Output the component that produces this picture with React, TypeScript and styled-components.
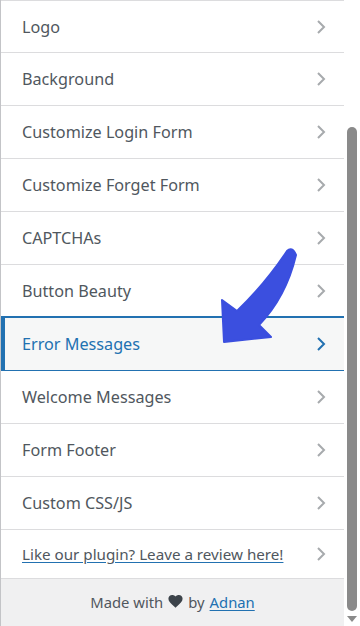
import React from 'react';
import styled, { createGlobalStyle } from 'styled-components';

const GlobalStyle = createGlobalStyle`
  html, body {
    margin: 0;
    padding: 0;
    background: #ffffff;
  }
  body {
    font-family: "Noto Sans", "Open Sans", sans-serif;
  }
`;

const Screen = styled.div`
  position: relative;
  display: flex;
  width: 360px;
  height: 626px;
  overflow: hidden;
`;

const Panel = styled.div`
  flex: 1;
  display: flex;
  flex-direction: column;
  border-left: 1px solid #c3c4c7;
  background: #ffffff;
`;

const List = styled.ul`
  list-style: none;
  margin: 0;
  padding: 0;
  border-top: 1px solid #dcdcde;
`;

const Row = styled.li<{ $active?: boolean }>`
  display: flex;
  align-items: center;
  justify-content: space-between;
  box-sizing: border-box;
  height: 53px;
  padding: 0 18px 0 21px;
  border-bottom: 1px solid ${(p) => (p.$active ? '#2271b1' : '#dcdcde')};
  background: ${(p) => (p.$active ? '#f6f7f7' : '#ffffff')};
  color: ${(p) => (p.$active ? '#2271b1' : '#50575e')};
  font-size: 16.2px;
  ${(p) =>
    p.$active &&
    `
    border-left: 4px solid #2271b1;
    padding-left: 17px;
    box-shadow: 0 -2px 0 #2271b1;
  `}
  &:first-child {
    height: 52px;
  }
`;

const ReviewRow = styled(Row)`
  height: 49px;
  border-bottom: 1px solid #dcdcde;
`;

const Label = styled.span`
  letter-spacing: 0;
`;

const ReviewLink = styled.a`
  color: #50575e;
  font-size: 15.2px;
  text-decoration: underline;
  text-decoration-color: #2271b1;
  text-underline-offset: 2px;
`;

const Chevron = styled.svg<{ $active?: boolean }>`
  width: 10px;
  height: 16px;
  fill: none;
  stroke: ${(p) => (p.$active ? '#2271b1' : '#a7aaad')};
  stroke-width: 2;
`;

const Footer = styled.div`
  flex: 1;
  display: flex;
  align-items: center;
  justify-content: center;
  gap: 5px;
  background: #f0f0f1;
  color: #50575e;
  font-size: 14.8px;
  padding-bottom: 2px;
`;

const Heart = styled.svg`
  width: 15px;
  height: 13px;
  fill: #3c434a;
`;

const AuthorLink = styled.a`
  color: #2271b1;
  text-decoration: underline;
  text-underline-offset: 2px;
`;

const ScrollTrack = styled.div`
  position: relative;
  width: 16px;
  background: #ffffff;
  display: flex;
  flex-direction: column;
  align-items: center;
`;

const Thumb = styled.div`
  margin-top: 127px;
  width: 10px;
  height: 484px;
  border-radius: 5px;
  background: #8a8a8a;
`;

const DownArrow = styled.div`
  margin-top: 5px;
  width: 0;
  height: 0;
  border-left: 5px solid transparent;
  border-right: 5px solid transparent;
  border-top: 6px solid #8a8a8a;
`;

const Pointer = styled.svg`
  position: absolute;
  left: 0;
  top: 0;
  width: 360px;
  height: 626px;
  pointer-events: none;
`;

const items = [
  'Logo',
  'Background',
  'Customize Login Form',
  'Customize Forget Form',
  'CAPTCHAs',
  'Button Beauty',
  'Error Messages',
  'Welcome Messages',
  'Form Footer',
  'Custom CSS/JS',
];

const ChevronIcon: React.FC<{ active?: boolean }> = ({ active }) => (
  <Chevron $active={active} viewBox="0 0 10 16">
    <path d="M2 2l6 6-6 6" />
  </Chevron>
);

const App: React.FC = () => {
  return (
    <>
      <GlobalStyle />
      <Screen>
        <Panel>
          <List>
            {items.map((item) => {
              const active = item === 'Error Messages';
              return (
                <Row key={item} $active={active}>
                  <Label>{item}</Label>
                  <ChevronIcon active={active} />
                </Row>
              );
            })}
            <ReviewRow>
              <ReviewLink href="#">Like our plugin? Leave a review here!</ReviewLink>
              <ChevronIcon />
            </ReviewRow>
          </List>
          <Footer>
            Made with
            <Heart viewBox="0 0 24 22">
              <path d="M12 21.5L10.3 20C4.2 14.5 0 10.8 0 6.3 0 2.7 2.8 0 6.4 0c2.1 0 4.1 1 5.6 2.5C13.5 1 15.5 0 17.6 0 21.2 0 24 2.7 24 6.3c0 4.5-4.2 8.2-10.3 13.7L12 21.5z" />
            </Heart>
            by <AuthorLink href="#">Adnan</AuthorLink>
          </Footer>
        </Panel>
        <ScrollTrack>
          <Thumb />
          <DownArrow />
        </ScrollTrack>
        <Pointer viewBox="0 0 360 626">
          <path
            d="M296 255 Q286 297 259 325 L271 337 L224 342 L222 300 L237 311 Q266 283 287 251 Q292 246 296 255 Z"
            fill="#3b4fdf"
            stroke="#3b4fdf"
            strokeWidth="2"
            strokeLinejoin="round"
          />
        </Pointer>
      </Screen>
    </>
  );
};

export default App;
